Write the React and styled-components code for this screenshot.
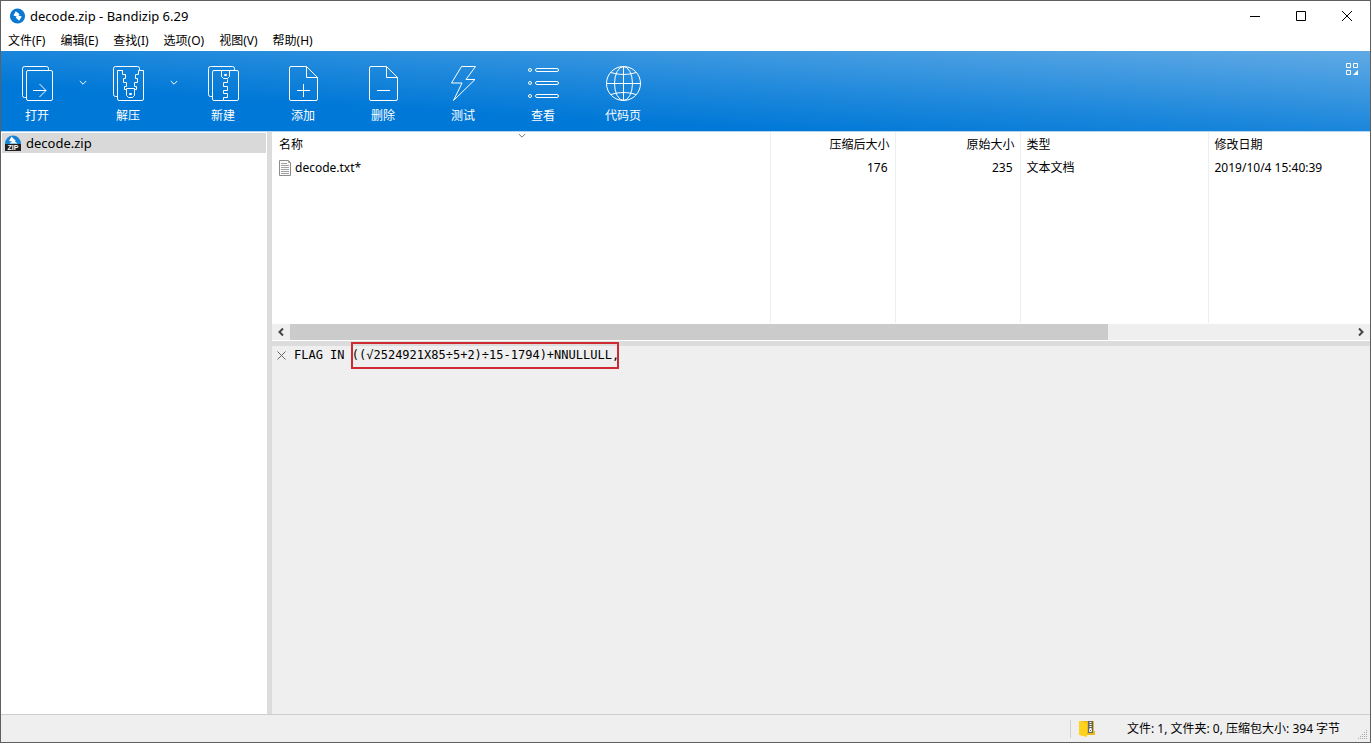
import React from 'react'
import styled, { createGlobalStyle } from 'styled-components'

const GlobalStyle = createGlobalStyle`
  * {
    box-sizing: border-box;
  }

  html,
  body,
  #root {
    height: 100%;
    margin: 0;
  }

  body {
    font: 12px/16px "Noto Sans", "Noto Sans CJK SC", sans-serif;
    color: #000;
    overflow: hidden;
  }

  button {
    font: inherit;
    color: inherit;
    background: none;
    border: none;
    padding: 0;
    margin: 0;
    cursor: default;
  }
`

const Window = styled.div`
  display: flex;
  flex-direction: column;
  height: 100%;
  background: white;
  border: 1px solid #606060;
`

const TitleBar = styled.header`
  display: flex;
  align-items: center;
  height: 29px;
  padding-left: 8px;
`

const Title = styled.h1`
  flex: 1;
  margin: 0 0 0 4px;
  font-size: 13px;
  font-weight: normal;
`

const CaptionButton = styled.button`
  display: flex;
  align-items: center;
  justify-content: center;
  width: 46px;
  height: 29px;
`

const MenuBar = styled.nav`
  display: flex;
  gap: 15px;
  height: 21px;
  padding-left: 7px;
`

const MenuItem = styled.button`
  height: 21px;
  white-space: nowrap;
`

const Toolbar = styled.div`
  display: flex;
  align-items: flex-start;
  flex: none;
  height: 81px;
  padding: 15px 11px 0 0;
  color: white;
  background: linear-gradient(to top right, #0078d7 28%, #1a86db 50%, #60aae5 100%);
  border-bottom: 1px solid #b4d3ee;
`

const Tool = styled.button`
  display: flex;
  flex-direction: column;
  align-items: center;
  gap: 6px;
  width: ${props => props.$narrow ? '72px' : '80px'};
`

const DropButton = styled.button`
  display: flex;
  justify-content: center;
  width: 19px;
  padding-top: 14px;
`

const Spacer = styled.div`
  flex: 1;
`

const LayoutButton = styled.button`
  display: flex;
  margin-top: -3px;
`

const Content = styled.div`
  display: flex;
  flex: 1;
  min-height: 0;
`

const Sidebar = styled.aside`
  flex: none;
  width: 271px;
  padding: 1px 1px 0;
  border-right: 5px solid #dcdcdc;
`

const TreeItem = styled.div`
  display: flex;
  align-items: center;
  gap: 5px;
  height: 20px;
  padding-left: 3px;
  font-size: 13px;
  background: #d9d9d9;
`

const Main = styled.main`
  display: flex;
  flex-direction: column;
  flex: 1;
  min-width: 0;
`

const FileList = styled.section`
  display: flex;
  position: relative;
  flex: none;
  height: 191px;
`

const SortMark = styled.svg`
  position: absolute;
  top: 1px;
  left: 246px;
`

const Table = styled.table`
  width: 100%;
  height: 100%;
  table-layout: fixed;
  border-collapse: collapse;
`

const Column = styled.col`
  width: ${props => props.$width};
`

const Row = styled.tr`
  height: 23px;
`

const HeadCell = styled.th`
  height: 24px;
  padding: 1px 5px 0 6px;
  font-weight: normal;
  text-align: ${props => props.$right ? 'right' : 'left'};
  white-space: nowrap;
  border-right: 1px solid #ebeff3;

  &:first-child {
    padding-left: 7px;
  }

  &:last-child {
    border-right: none;
  }
`

const Cell = styled.td`
  padding: 0 7px 0 6px;
  text-align: ${props => props.$right ? 'right' : 'left'};
  white-space: nowrap;
  border-right: 1px solid #ebeff3;

  &:first-child {
    padding-left: 7px;
  }

  &:last-child {
    border-right: none;
  }
`

const FileName = styled.span`
  display: flex;
  align-items: center;
  gap: 3px;
`

const ScrollBar = styled.div`
  display: flex;
  align-items: center;
  flex: none;
  height: 18px;
  background: #efefef;
  border-top: 1px solid white;
  border-bottom: 1px solid white;
`

const ScrollButton = styled.button`
  display: flex;
  align-items: center;
  justify-content: center;
  width: 18px;
  height: 16px;
`

const ScrollTrack = styled.div`
  flex: 1;
  height: 16px;
`

const ScrollThumb = styled.div`
  width: 77%;
  height: 100%;
  background: #cbcbcb;
`

const Comment = styled.section`
  display: flex;
  align-items: flex-start;
  flex: 1;
  background: #efefef;
  border-top: 5px solid #dcdcdc;
`

const CloseComment = styled.button`
  display: flex;
  align-items: center;
  justify-content: center;
  width: 18px;
  height: 18px;
`

const CommentText = styled.p`
  margin: 0 0 0 4px;
  font: 12px/18px "DejaVu Sans Mono", monospace;
  white-space: pre;
`

const Marked = styled.mark`
  display: inline-block;
  position: relative;
  color: inherit;
  background: none;

  &::after {
    content: '';
    position: absolute;
    inset: -4px 0 -5px -1px;
    border: 2px solid #cf2a32;
  }
`

const StatusBar = styled.footer`
  display: flex;
  align-items: center;
  justify-content: flex-end;
  flex: none;
  height: 28px;
  background: #efefef;
  border-top: 1px solid #cdcdcd;
`

const StatusIcon = styled.span`
  display: flex;
  align-items: center;
  height: 18px;
  padding-left: 8px;
  margin-right: 31px;
  border-left: 1px solid #d0d0d0;
`

const StatusText = styled.span`
  min-width: 219px;
`

const Grip = styled.svg`
  align-self: flex-end;
  margin: 0 3px 3px 12px;
`

const line = { fill: 'none', stroke: 'currentColor' }

const AppLogo = () =>
  <svg width='17' height='16' viewBox='0 0 17 16' aria-hidden='true'>
    <circle cx='8.5' cy='8' r='7.6' fill='#0a78d3' />
    <path d='M6.8 3.2 10.6 6.2 9.4 7.4 12.8 8.4 10.2 12.8 6.6 9.6 7.8 8.4 4.4 7.6Z' fill='white' />
  </svg>

const ZipIcon = () =>
  <svg width='16' height='16' viewBox='0 0 16 16' aria-hidden='true'>
    <path d='M0 9a8 8.5 0 0 1 16 0z' fill='#1583d5' />
    <path d='M6.5 1.5 11 6H9.5L12.5 8.5H4.5L7 6.5 4 6Z' fill='white' />
    <path d='M0 9h16v7H0z' fill='#202020' />
    <text x='8' y='15' fill='white' fontFamily='Liberation Sans, sans-serif' fontSize='7' fontWeight='bold' textAnchor='middle'>ZIP</text>
  </svg>

const TextFileIcon = () =>
  <svg width='13' height='16' viewBox='0 0 13 16' aria-hidden='true'>
    <path d='M.5.5h9l2 2v13H.5z' fill='#fafafa' stroke='#8c8c8c' />
    <path d='M9.5.5v2h2M2 3.5h6M2 5.5h8M2 7.5h8M2 9.5h8M2 11.5h8M2 13.5h8' fill='none' stroke='#a3a3a3' />
  </svg>

const FolderZipIcon = () =>
  <svg width='17' height='17' viewBox='0 0 17 17' aria-hidden='true'>
    <path d='M2 1h13v10h1v4H5z' fill='#e9b91c' />
    <path d='M0 1h2l6 2v14l-8-2z' fill='#ffd21c' />
    <path d='M9 1h5v12H9z' fill='#666' />
    <path d='M11.5 2v8' stroke='white' strokeWidth='2' strokeDasharray='1 1' />
    <path d='M10.5 9.5h2v2h-2z' fill='none' stroke='white' />
  </svg>

const Chevron = () =>
  <svg width='8' height='6' viewBox='0 0 8 6' aria-hidden='true' {...line}>
    <path d='M.8 1 4 4.2 7.2 1' />
  </svg>

const icons = {
  open: <>
    <path d='M8.5 31.5h-2a2 2 0 0 1-2-2v-27a2 2 0 0 1 2-2h22a2 2 0 0 1 2 2v2' />
    <rect x='8.5' y='4.5' width='26' height='30' rx='1.5' />
    <path d='M15 24.5h13M21.5 18l6.5 6.5-6.5 6.5' />
  </>,
  extract: <>
    <path d='M8.5 30.5h-2a2 2 0 0 1-2-2v-26a2 2 0 0 1 2-2h22a2 2 0 0 1 2 2v2' />
    <path d='M13.5 4.5h-5V33a1.5 1.5 0 0 0 1.5 1.5h23a1.5 1.5 0 0 0 1.5-1.5V4.5h-5' />
    <path d='M13.5 4.5v4h3v4h-2v4h3v4h-2v3h2M29.5 4.5v4h-3v4h2v4h-3v4h2v3h-2' />
    <path d='M17.5 22.5h8v7l-2 2h-4l-2-2zM20.5 27.5h2v1h-2z' />
  </>,
  create: <>
    <path d='M8.5 30.5h-2a2 2 0 0 1-2-2v-26a2 2 0 0 1 2-2h22a2 2 0 0 1 2 2v2' />
    <path d='M19.5 34.5H10A1.5 1.5 0 0 1 8.5 33V6A1.5 1.5 0 0 1 10 4.5h23A1.5 1.5 0 0 1 34.5 6v27a1.5 1.5 0 0 1-1.5 1.5H19.5v-3h4v-4h-4v-3h4v-4h-4v-4h4v-3' />
    <path d='M17.5 4.5v6l2 2h4l2-2v-6M20.5 8.5h2v1h-2z' />
  </>,
  add: <>
    <path d='M7 .5h15.5l11 11V33a1.5 1.5 0 0 1-1.5 1.5H7A1.5 1.5 0 0 1 5.5 33V2A1.5 1.5 0 0 1 7 .5M22.5.5v11h11' />
    <path d='M13 24.5h13M19.5 18v13' />
  </>,
  remove: <>
    <path d='M7 .5h15.5l11 11V33a1.5 1.5 0 0 1-1.5 1.5H7A1.5 1.5 0 0 1 5.5 33V2A1.5 1.5 0 0 1 7 .5M22.5.5v11h11' />
    <path d='M13 24.5h13' />
  </>,
  test: <path d='M17.5.5h14l-9.5 13h9l-21.5 21L18 17H7.500z' />,
  view: <>
    <circle cx='6' cy='4' r='1.5' />
    <circle cx='6' cy='17' r='1.5' />
    <circle cx='6' cy='30' r='1.5' />
    <rect x='11.5' y='2.5' width='23' height='3' rx='1.5' />
    <rect x='11.5' y='15.5' width='23' height='3' rx='1.5' />
    <rect x='11.5' y='28.5' width='23' height='3' rx='1.5' />
  </>,
  codepage: <>
    <circle cx='19.5' cy='17.5' r='17' />
    <ellipse cx='19.5' cy='17.5' rx='9' ry='17' />
    <path d='M19.5.5v34M2 17.5h35M7 6.5c8 2.6 17 2.6 25 0M7 28.5c8-2.6 17-2.6 25 0' />
  </>,
}

const tools = [
  { id: 'open', label: '打开', drop: true },
  { id: 'extract', label: '解压', drop: true },
  { id: 'create', label: '新建' },
  { id: 'add', label: '添加' },
  { id: 'remove', label: '删除' },
  { id: 'test', label: '测试' },
  { id: 'view', label: '查看' },
  { id: 'codepage', label: '代码页' },
]

const menus = ['文件(F)', '编辑(E)', '查找(I)', '选项(O)', '视图(V)', '帮助(H)']

const columns = [
  { label: '名称', width: '498px' },
  { label: '压缩后大小', width: '125px', right: true },
  { label: '原始大小', width: '125px', right: true },
  { label: '类型', width: '188px' },
  { label: '修改日期', width: 'auto' },
]

const App = () =>
  <Window>
    <GlobalStyle />
    <TitleBar>
      <AppLogo />
      <Title>decode.zip - Bandizip 6.29</Title>
      <CaptionButton aria-label='最小化'>
        <svg width='10' height='10' {...line}><path d='M0 5.5h10' /></svg>
      </CaptionButton>
      <CaptionButton aria-label='最大化'>
        <svg width='10' height='10' {...line}><path d='M.5.5h9v9h-9z' /></svg>
      </CaptionButton>
      <CaptionButton aria-label='关闭'>
        <svg width='10' height='10' {...line}><path d='m0 0 10 10M10 0 0 10' /></svg>
      </CaptionButton>
    </TitleBar>
    <MenuBar>
      {menus.map(label => <MenuItem key={label}>{label}</MenuItem>)}
    </MenuBar>
    <Toolbar>
      {tools.map(({ id, label, drop }) =>
        <React.Fragment key={id}>
          <Tool $narrow={drop}>
            <svg width='38' height='36' viewBox='0 0 38 36' aria-hidden='true' {...line}>{icons[id]}</svg>
            {label}
          </Tool>
          {drop && <DropButton aria-label={label}><Chevron /></DropButton>}
        </React.Fragment>
      )}
      <Spacer />
      <LayoutButton aria-label='布局'>
        <svg width='13' height='12' viewBox='0 0 13 12' {...line}>
          <path d='M.5.5h4v4h-4zM7.5.5h4v4h-4zM.5 7.5h4v4h-4z' />
          <path d='M12 7v5H7z' fill='currentColor' stroke='none' />
        </svg>
      </LayoutButton>
    </Toolbar>
    <Content>
      <Sidebar>
        <TreeItem><ZipIcon />decode.zip</TreeItem>
      </Sidebar>
      <Main>
        <FileList>
          <Table>
            <colgroup>
              {columns.map(({ label, width }) => <Column key={label} $width={width} />)}
            </colgroup>
            <thead>
              <Row>
                {columns.map(({ label, right }) => <HeadCell key={label} $right={right}>{label}</HeadCell>)}
              </Row>
            </thead>
            <tbody>
              <Row>
                <Cell><FileName><TextFileIcon />decode.txt*</FileName></Cell>
                <Cell $right>176</Cell>
                <Cell $right>235</Cell>
                <Cell>文本文档</Cell>
                <Cell>2019/10/4 15:40:39</Cell>
              </Row>
              <tr>
                {columns.map(({ label }) => <Cell key={label} />)}
              </tr>
            </tbody>
          </Table>
          <SortMark width='8' height='6' fill='none' stroke='#777' aria-hidden='true'>
            <path d='M.8 1 4 4.2 7.2 1' />
          </SortMark>
        </FileList>
        <ScrollBar>
          <ScrollButton aria-label='向左滚动'>
            <svg width='6' height='8' fill='none' stroke='#444' strokeWidth='2'><path d='M5 .5 1.5 4 5 7.5' /></svg>
          </ScrollButton>
          <ScrollTrack><ScrollThumb /></ScrollTrack>
          <ScrollButton aria-label='向右滚动'>
            <svg width='6' height='8' fill='none' stroke='#444' strokeWidth='2'><path d='M1 .5 4.5 4 1 7.5' /></svg>
          </ScrollButton>
        </ScrollBar>
        <Comment>
          <CloseComment aria-label='关闭注释'>
            <svg width='9' height='9' fill='none' stroke='#666'><path d='m.5.5 8 8M8.5.5l-8 8' /></svg>
          </CloseComment>
          <CommentText>FLAG IN <Marked>((√2524921X85÷5+2)÷15-1794)+NNULLULL,</Marked></CommentText>
        </Comment>
      </Main>
    </Content>
    <StatusBar>
      <StatusIcon><FolderZipIcon /></StatusIcon>
      <StatusText>文件: 1, 文件夹: 0, 压缩包大小: 394 字节</StatusText>
      <Grip width='9' height='9' fill='#aaa' aria-hidden='true'>
        <path d='M8 0h1v1H8zM6 2h1v1H6zM8 2h1v1H8zM4 4h1v1H4zM6 4h1v1H6zM8 4h1v1H8zM2 6h1v1H2zM4 6h1v1H4zM6 6h1v1H6zM8 6h1v1H8zM0 8h1v1H0zM2 8h1v1H2zM4 8h1v1H4zM6 8h1v1H6zM8 8h1v1H8z' />
      </Grip>
    </StatusBar>
  </Window>

export default App
